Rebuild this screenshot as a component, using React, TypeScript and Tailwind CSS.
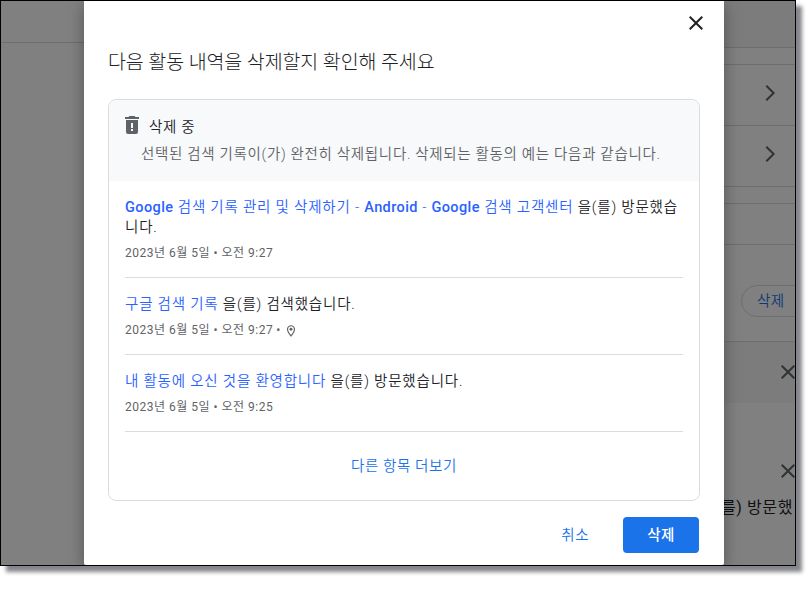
import type { ReactNode } from "react";

const activities = [
  {
    link: "Google 검색 기록 관리 및 삭제하기 - Android - Google 검색 고객센터",
    action: "을(를) 방문했습니다.",
    date: "2023년 6월 5일 • 오전 9:27",
    located: false,
  },
  {
    link: "구글 검색 기록",
    action: "을(를) 검색했습니다.",
    date: "2023년 6월 5일 • 오전 9:27",
    located: true,
  },
  {
    link: "내 활동에 오신 것을 환영합니다",
    action: "을(를) 방문했습니다.",
    date: "2023년 6월 5일 • 오전 9:25",
    located: false,
  },
];

function Icon({ className, children }: { className: string; children: ReactNode }) {
  return (
    <svg viewBox="0 0 24 24" fill="currentColor" className={`shrink-0 ${className}`}>
      {children}
    </svg>
  );
}

function CloseIcon({ className }: { className: string }) {
  return (
    <Icon className={className}>
      <path d="M19 6.41L17.59 5 12 10.59 6.41 5 5 6.41 10.59 12 5 17.59 6.41 19 12 13.41 17.59 19 19 17.59 13.41 12z" />
    </Icon>
  );
}

function ChevronRow() {
  return (
    <div className="flex h-[61px] items-center justify-end border-b border-[#6d6e70] pr-3.5 pb-1">
      <Icon className="size-6 text-[#2f3133]">
        <path d="M8.59 5.41L10 4l8 8-8 8-1.41-1.41L15.17 12z" />
      </Icon>
    </div>
  );
}

function LeftBackdrop() {
  return (
    <div className="w-[83px] shrink-0">
      <div className="h-[42px] border-b border-[#6d6e70]" />
    </div>
  );
}

function RightBackdrop() {
  return (
    <div className="w-[71px] shrink-0 overflow-hidden">
      <div className="h-[47px] border-b border-[#6d6e70] bg-[#7c7c7d]" />
      <div className="h-[17px] border-b border-[#6d6e70]" />
      <ChevronRow />
      <ChevronRow />
      <div className="h-[17px] border-b border-[#6d6e70]" />
      <div className="h-[41px] border-b border-[#6d6e70]" />
      <div className="h-[97px] border-b border-[#6d6e70] pt-10 pl-[17px]">
        <div className="flex h-8 w-20 items-center rounded-full border border-[#6d6e70] pt-0.5 pl-[15px] text-[14.5px] font-[350] tracking-[0.4px] whitespace-nowrap text-[#0d3974]">
          삭제
        </div>
      </div>
      <div className="flex h-[61px] items-center bg-[#7c7c7d] pb-0.5 pl-[52px]">
        <CloseIcon className="size-6 text-[#303234]" />
      </div>
      <div className="flex h-[136px] items-center pl-[52px]">
        <CloseIcon className="size-6 text-[#303234]" />
      </div>
      <div className="-mt-[43px] flex h-[23px] items-center justify-end pr-[2px] text-[16px] tracking-[0.6px] whitespace-nowrap text-[#101012]">
        를) 방문했
      </div>
    </div>
  );
}

function ActivityRow({ link, action, date, located }: (typeof activities)[number]) {
  return (
    <div className="border-b border-[#dadce0] pt-[17px] pb-4">
      <p className="text-[14.5px] leading-5 font-[350] tracking-[0.8px] break-all text-[#202124]">
        <a className="text-[#2962ff]">
          {link.split(/(Google|Android)/).map((part, i) =>
            i % 2 ? (
              <span key={i} className="font-medium tracking-[0.4px]">
                {part}
              </span>
            ) : (
              part
            ),
          )}
        </a>{" "}
        {action}
      </p>
      <div className="mt-[7px] flex h-4 items-center text-[12px] leading-4 tracking-[0.5px] text-[#5f6368]">
        <span>{date}</span>
        {located && (
          <>
            <span className="ml-[3px]">•</span>
            <Icon className="mt-0.5 ml-[3px] size-3.5">
              <path d="M12 2C8.13 2 5 5.13 5 9c0 5.25 7 13 7 13s7-7.75 7-13c0-3.87-3.13-7-7-7zM7 9c0-2.76 2.24-5 5-5s5 2.24 5 5c0 2.88-2.88 7.19-5 9.88C9.92 16.21 7 11.85 7 9z" />
              <circle cx="12" cy="9" r="2.5" />
            </Icon>
          </>
        )}
      </div>
    </div>
  );
}

function Dialog() {
  return (
    <div className="relative flex w-[640px] shrink-0 flex-col rounded-b-[2px] bg-white px-6 shadow-[0_4px_16px_rgba(0,0,0,0.35)]">
      <div className="-mr-2 flex h-11 items-center justify-end">
        <CloseIcon className="size-6 text-[#202124]" />
      </div>
      <h1 className="h-[54px] text-[19.5px] leading-9 font-light tracking-[-0.1px] whitespace-nowrap text-[#202124]">
        다음 활동 내역을 삭제할지 확인해 주세요
      </h1>
      <div className="h-[402px] w-[592px] overflow-hidden rounded-lg border border-[#dadce0]">
        <div className="h-[81px] bg-[#f8f9fb] px-4 pt-4">
          <div className="flex h-5 text-[14.5px] leading-[23px] font-[350] tracking-[0.65px] text-[#202124]">
            <svg viewBox="0 0 14 18" className="mr-2.5 h-[18px] w-3.5 shrink-0 fill-[#5f6368]">
              <path d="M0 1h3.5l1-1h5l1 1H14v2H0z" />
              <path
                fillRule="evenodd"
                d="M1 4h12v12a2 2 0 0 1-2 2H3a2 2 0 0 1-2-2zM6 7h2v5H6zM6 13h2v2H6z"
              />
            </svg>
            삭제 중
          </div>
          <p className="mt-2 pl-4 text-[14.5px] leading-[21px] font-[350] tracking-[0.68px] whitespace-nowrap text-[#5f6368]">
            선택된 검색 기록이(가) 완전히 삭제됩니다. 삭제되는 활동의 예는 다음과 같습니다.
          </p>
        </div>
        <div className="px-4">
          {activities.map((activity) => (
            <ActivityRow key={activity.link} {...activity} />
          ))}
        </div>
        <div className="flex h-[68px] items-center justify-center pt-0.5 text-[14.5px] font-[350] tracking-[0.6px] text-[#1a73e8]">
          다른 항목 더보기
        </div>
      </div>
      <div className="mt-4 flex items-center justify-end gap-[34px] pr-px text-[14.5px] tracking-[0.5px]">
        <button className="pt-0.5 font-[350] text-[#1a73e8]">취소</button>
        <button className="h-9 w-[76px] rounded bg-[#1a73e8] pt-0.5 font-medium text-white">
          삭제
        </button>
      </div>
    </div>
  );
}

export default function App() {
  return (
    <div className="h-[593px] w-[808px] overflow-hidden bg-white font-[Roboto,'Noto_Sans_CJK_KR',sans-serif]">
      <div className="h-[566px] w-[796px] border border-black shadow-[6px_6px_4px_#85868c]">
        <div className="flex h-full overflow-hidden bg-[#808080]">
          <LeftBackdrop />
          <Dialog />
          <RightBackdrop />
        </div>
      </div>
    </div>
  );
}
